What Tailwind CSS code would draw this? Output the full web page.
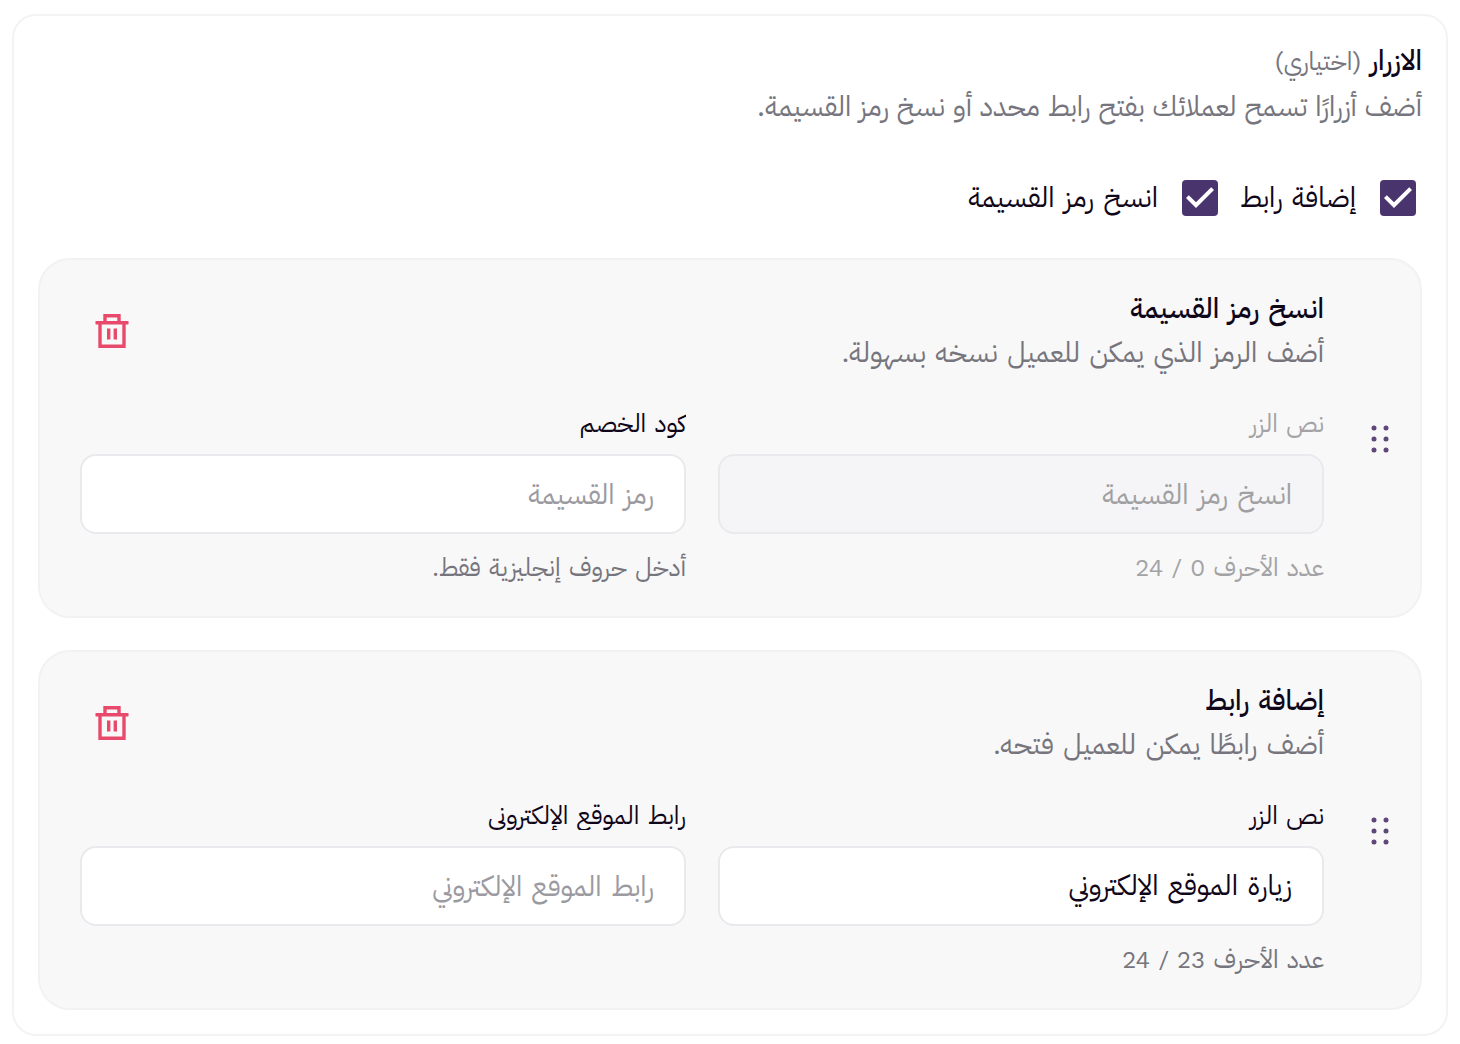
<!DOCTYPE html>
<html lang="ar" dir="rtl">
<head>
<meta charset="utf-8">
<meta name="viewport" content="width=device-width, initial-scale=1">
<title>الازرار</title>
<script src="https://cdn.jsdelivr.net/npm/@tailwindcss/browser@4"></script>
</head>
<body class="bg-white px-3 pt-3.5 pb-2 font-['Work_Sans','IBM_Plex_Sans_Arabic',sans-serif] text-[28px] leading-[44px] text-[#0f0619]">
<svg class="hidden" aria-hidden="true">
  <symbol id="check" viewBox="3 3 18 18"><path d="M10 17l-5-5 1.410-1.410L10 14.170l7.590-7.590L19 8l-9 9z" fill="#fff"/></symbol>
  <symbol id="trash" viewBox="0 0 36 36"><path d="M1.500 9.700h33M11 9.700V2.700h14v7M6 9.700v23.600h24V9.700M14.700 15.500v11M21.300 15.500v11" fill="none" stroke="#e84a6b" stroke-width="3.400"/></symbol>
  <symbol id="grip" viewBox="0 0 20 28"><g fill="#5f4777"><circle cx="4" cy="3" r="2.500"/><circle cx="16" cy="3" r="2.500"/><circle cx="4" cy="14" r="2.500"/><circle cx="16" cy="14" r="2.500"/><circle cx="4" cy="25" r="2.500"/><circle cx="16" cy="25" r="2.500"/></g></symbol>
</svg>
<main class="rounded-3xl border-2 border-[#f3f3f3] px-6 pt-[23px] pb-6">
  <header>
    <h1 class="font-medium">الازرار <span class="text-[25px] font-normal text-[#76757d]">(اختياري)</span></h1>
    <p class="font-['Inter','IBM_Plex_Sans_Arabic',sans-serif] text-[#76757d]">أضف أزرارًا تسمح لعملائك بفتح رابط محدد أو نسخ رمز القسيمة.</p>
  </header>

  <div class="mt-12 flex items-center gap-[22px] px-1.5">
    <label class="flex items-center gap-6">
      <span class="grid size-9">
        <input type="checkbox" checked class="col-start-1 row-start-1 size-9 appearance-none rounded bg-[#4a346e]">
        <svg class="pointer-events-none col-start-1 row-start-1 size-9" aria-hidden="true"><use href="#check"/></svg>
      </span>
      إضافة رابط
    </label>
    <label class="flex items-center gap-6">
      <span class="grid size-9">
        <input type="checkbox" checked class="col-start-1 row-start-1 size-9 appearance-none rounded bg-[#4a346e]">
        <svg class="pointer-events-none col-start-1 row-start-1 size-9" aria-hidden="true"><use href="#check"/></svg>
      </span>
      انسخ رمز القسيمة
    </label>
  </div>

  <section class="mt-[38px] flex rounded-[32px] border-2 border-[#f2f2f2] bg-[#f8f8f8] pt-[27px] pb-[30px] pl-10">
    <button type="button" aria-label="إعادة ترتيب" class="flex w-24 shrink-0 items-center justify-center pl-4"><svg class="mt-1 h-7 w-5" aria-hidden="true"><use href="#grip"/></svg></button>
    <div class="min-w-0 flex-1">
      <div class="flex items-center justify-between">
        <div>
          <h2 class="font-medium">انسخ رمز القسيمة</h2>
          <p class="text-[#76757d]">أضف الرمز الذي يمكن للعميل نسخه بسهولة.</p>
        </div>
        <button type="button" aria-label="حذف" class="flex size-16 items-center justify-center"><svg class="size-9" aria-hidden="true"><use href="#trash"/></svg></button>
      </div>
      <div class="mt-[35px] grid grid-cols-2 gap-8">
        <div>
          <label for="copy-text" class="block overflow-hidden text-[25px] leading-7 text-[#a3a3a6]">نص الزر</label>
          <input id="copy-text" type="text" disabled placeholder="انسخ رمز القسيمة" class="mt-4 block h-20 w-full rounded-2xl border-2 border-[#e9e9ee] bg-[#f5f5f8] px-[30px] placeholder:text-[#a0a0a2]">
          <p class="mt-4 text-[25px] leading-9 text-[#a3a3a6]">عدد الأحرف <span class="text-2xl leading-9">0 / 24</span></p>
        </div>
        <div>
          <label for="copy-code" class="block overflow-hidden text-[25px] leading-7">كود الخصم</label>
          <input id="copy-code" type="text" placeholder="رمز القسيمة" class="mt-4 block h-20 w-full rounded-2xl border-2 border-[#e9e9ee] bg-white px-[30px] placeholder:text-[#9b9aa1]">
          <p class="mt-4 text-[25px] leading-9 text-[#76757d]">أدخل حروف إنجليزية فقط.</p>
        </div>
      </div>
    </div>
  </section>

  <section class="mt-8 flex rounded-[32px] border-2 border-[#f2f2f2] bg-[#f8f8f8] pt-[27px] pb-[30px] pl-10">
    <button type="button" aria-label="إعادة ترتيب" class="flex w-24 shrink-0 items-center justify-center pl-4"><svg class="mt-1 h-7 w-5" aria-hidden="true"><use href="#grip"/></svg></button>
    <div class="min-w-0 flex-1">
      <div class="flex items-center justify-between">
        <div>
          <h2 class="font-medium">إضافة رابط</h2>
          <p class="text-[#76757d]">أضف رابطًا يمكن للعميل فتحه.</p>
        </div>
        <button type="button" aria-label="حذف" class="flex size-16 items-center justify-center"><svg class="size-9" aria-hidden="true"><use href="#trash"/></svg></button>
      </div>
      <div class="mt-[35px] grid grid-cols-2 gap-8">
        <div>
          <label for="link-text" class="block overflow-hidden text-[25px] leading-7">نص الزر</label>
          <input id="link-text" type="text" value="زيارة الموقع الإلكتروني" class="mt-4 block h-20 w-full rounded-2xl border-2 border-[#e9e9ee] bg-white px-[30px]">
          <p class="mt-4 text-[25px] leading-9 text-[#76757d]">عدد الأحرف <span class="text-2xl leading-9">23 / 24</span></p>
        </div>
        <div>
          <label for="link-url" class="block overflow-hidden text-[25px] leading-7">رابط الموقع الإلكتروني</label>
          <input id="link-url" type="text" placeholder="رابط الموقع الإلكتروني" class="mt-4 block h-20 w-full rounded-2xl border-2 border-[#e9e9ee] bg-white px-[30px] placeholder:text-[#9b9aa1]">
        </div>
      </div>
    </div>
  </section>
</main>
</body>
</html>
